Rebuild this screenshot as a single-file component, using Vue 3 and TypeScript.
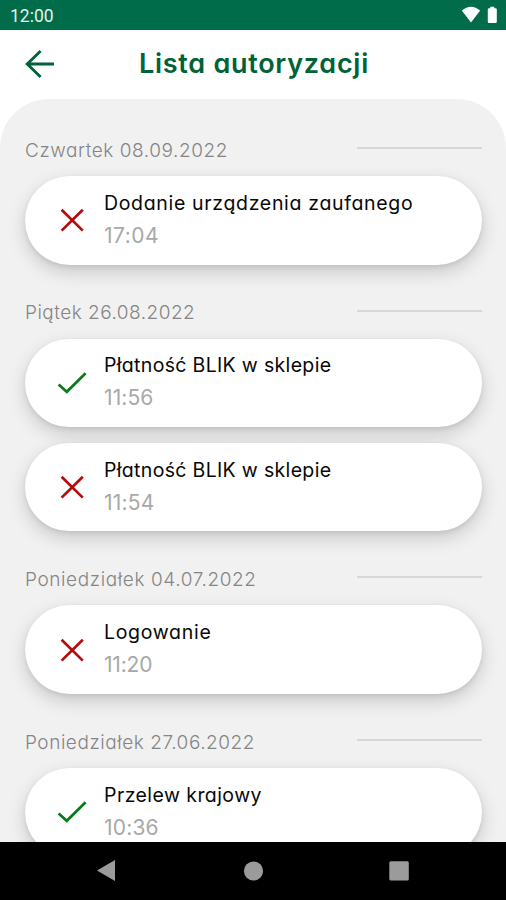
<script setup lang="ts">
interface Entry {
  title: string
  time: string
  accepted: boolean
  spacing: number
  timeSpacing: number
}

interface DayGroup {
  label: string
  spacing: number
  entries: Entry[]
}

const groups: DayGroup[] = [
  {
    label: 'Czwartek 08.09.2022',
    spacing: 0.56,
    entries: [{ title: 'Dodanie urządzenia zaufanego', time: '17:04', accepted: false, spacing: 0.67, timeSpacing: 0.5 }],
  },
  {
    label: 'Piątek 26.08.2022',
    spacing: 0.48,
    entries: [
      { title: 'Płatność BLIK w sklepie', time: '11:56', accepted: true, spacing: 0.33, timeSpacing: 0.1 },
      { title: 'Płatność BLIK w sklepie', time: '11:54', accepted: false, spacing: 0.33, timeSpacing: 0.2 },
    ],
  },
  {
    label: 'Poniedziałek 04.07.2022',
    spacing: 0.6,
    entries: [{ title: 'Logowanie', time: '11:20', accepted: false, spacing: 0.7, timeSpacing: -0.2 }],
  },
  {
    label: 'Poniedziałek 27.06.2022',
    spacing: 0.54,
    entries: [{ title: 'Przelew krajowy', time: '10:36', accepted: true, spacing: 0.43, timeSpacing: 0.2 }],
  },
]
</script>

<template>
  <div class="screen">
    <div class="status">
      <span class="clock">12:00</span>
      <svg class="status-icons" width="38" height="18" viewBox="0 0 38 18">
        <path d="M0.8 4.600Q10 -3 19.200 4.600L10 16.400Z" fill="#fff" />
        <path d="M29.300 0.800h4v1.500h1.200q1.300 0 1.300 1.300v12.100q0 1.300-1.300 1.300h-6.400q-1.300 0-1.300-1.300V3.600q0-1.300 1.300-1.300h1.200Z" fill="#fff" />
      </svg>
    </div>
    <header class="header">
      <svg class="back" width="30" height="30" viewBox="0 0 30 30">
        <path d="M15.600 1.900L2.200 15L15.600 28.100M2.200 15H29" />
      </svg>
      <h1 class="title">Lista autoryzacji</h1>
    </header>
    <main class="panel">
      <section v-for="group in groups" :key="group.label" class="group">
        <div class="day">
          <span class="day-label" :style="{ letterSpacing: group.spacing + 'px' }">{{ group.label }}</span>
          <span class="rule"></span>
        </div>
        <div class="cards">
          <article v-for="entry in group.entries" :key="entry.time" class="card">
            <svg class="mark" width="30" height="30" viewBox="0 0 30 30">
              <path v-if="entry.accepted" class="yes" d="M1.600 16.500L9.800 23.800L28.600 5.300" />
              <path v-else class="no" d="M4.600 4.800L25.800 25.600M25.800 4.800L4.600 25.600" />
            </svg>
            <div class="text">
              <span class="name" :style="{ letterSpacing: entry.spacing + 'px' }">{{ entry.title }}</span>
              <span class="time" :style="{ letterSpacing: entry.timeSpacing + 'px' }">{{ entry.time }}</span>
            </div>
          </article>
        </div>
      </section>
    </main>
    <nav class="nav">
      <svg width="22" height="24" viewBox="0 0 22 24"><path d="M1 11.500L19 1V22Z" /></svg>
      <svg width="22" height="24" viewBox="0 0 22 24"><circle cx="11.500" cy="12" r="9.600" /></svg>
      <svg width="22" height="24" viewBox="0 0 22 24"><rect x="1.300" y="2.200" width="19.500" height="19.300" rx="1.500" /></svg>
    </nav>
  </div>
</template>

<style>
body {
  margin: 0;
}
</style>

<style scoped>
.screen {
  width: 506px;
  height: 900px;
  display: flex;
  flex-direction: column;
  overflow: hidden;
  background: #fff;
  font-family: Inter, "Liberation Sans", sans-serif;
  font-feature-settings: "cv11" 1;
}
.status {
  height: 29.500px;
  flex: none;
  box-sizing: border-box;
  padding: 0 7px 0 10px;
  display: flex;
  justify-content: space-between;
  background: #006c49;
}
.clock {
  font: 400 17.500px/32px Roboto, sans-serif;
  color: #e4f0eb;
}
.status-icons {
  margin-top: 6px;
}
.header {
  height: 69.500px;
  flex: none;
  display: flex;
  align-items: center;
  padding-left: 25px;
}
.back {
  flex: none;
}
.back path {
  fill: none;
  stroke: #006236;
  stroke-width: 2.800;
}
.title {
  margin: 0 0 0 84px;
  font-size: 27px;
  line-height: 36px;
  font-weight: 600;
  letter-spacing: 0.720px;
  color: #006236;
  white-space: nowrap;
}
.panel {
  flex: 1;
  min-height: 0;
  box-sizing: border-box;
  padding: 2.900px 24px 0 25px;
  overflow: hidden;
  border-radius: 49px 49px 0 0;
  background: #f1f1f1;
}
.day {
  height: 74px;
  display: flex;
  align-items: center;
  justify-content: space-between;
}
.day-label {
  margin-top: 23.500px;
  font-size: 19px;
  line-height: 28px;
  font-weight: 300;
  color: #858585;
  white-space: nowrap;
}
.rule {
  width: 125px;
  height: 2px;
  margin-top: 18px;
  background: #d7d7d7;
}
.cards {
  display: flex;
  flex-direction: column;
  gap: 15.500px;
}
.card {
  height: 88.670px;
  box-sizing: border-box;
  padding-left: 32px;
  display: flex;
  align-items: center;
  border-radius: 45px;
  background: #fff;
  box-shadow: 0 7px 18px rgba(0, 0, 0, 0.17), 0 2px 5px rgba(0, 0, 0, 0.08);
}
.mark {
  flex: none;
}
.mark path {
  fill: none;
  stroke-width: 2.700;
}
.yes {
  stroke: #087b18;
}
.no {
  stroke: #b40b0b;
}
.text {
  margin: -2px 0 0 17px;
  display: flex;
  flex-direction: column;
  white-space: nowrap;
}
.name {
  font-size: 19.500px;
  line-height: 32px;
  color: #080808;
}
.time {
  font-size: 21px;
  line-height: 33px;
  color: #a8a8a8;
}
.nav {
  height: 58px;
  flex: none;
  box-sizing: border-box;
  padding: 0 96px 0 96px;
  display: flex;
  align-items: center;
  justify-content: space-between;
  background: #000;
}
.nav svg {
  fill: #9b9b9b;
}
</style>
